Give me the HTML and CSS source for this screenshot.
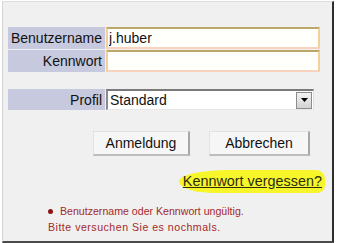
FILE: index.html
```html
<!DOCTYPE html>
<html lang="de">
<head>
<meta charset="utf-8">
<title>Anmeldung</title>
<link rel="stylesheet" href="styles.css">
</head>
<body>
<div class="panel">
  <div class="fields">
    <label class="lbl" for="user">Benutzername</label>
    <input class="txt" id="user" type="text" value="j.huber">
    <label class="lbl" for="pw">Kennwort</label>
    <input class="txt" id="pw" type="password" value="">
  </div>
  <div class="fields profil">
    <label class="lbl">Profil</label>
    <div class="select">
      <span class="sel-text">Standard</span>
      <span class="sel-btn"><svg width="7" height="4" viewBox="0 0 7 4"><path d="M0 0H7L3.5 4Z" fill="#000"/></svg></span>
    </div>
  </div>
  <div class="buttons">
    <button class="btn btn-login">Anmeldung</button>
    <button class="btn btn-cancel">Abbrechen</button>
  </div>
  <div class="forgot">
    <span class="hl"><a href="#">Kennwort vergessen?</a></span>
  </div>
  <div class="errors">
    <div class="err"><span class="dot"></span>Benutzername oder Kennwort ungültig.</div>
    <div class="err2">Bitte versuchen Sie es nochmals.</div>
  </div>
</div>
</body>
</html>
```
FILE: styles.css
```css
html, body {
  margin: 0;
  padding: 0;
  background: #ffffff;
}
body {
  font-family: "Liberation Sans", Arial, sans-serif;
  color: #111;
}
.panel {
  box-sizing: border-box;
  width: 332px;
  height: 242px;
  margin: 1px 0 0 2px;
  background: #f0f0f0;
  border-top: 1px solid #dcdcdc;
  border-left: 1px solid #d4d4d4;
  border-right: 2px solid #2e2e2e;
  border-bottom: 2px solid #4a4a4a;
  padding: 25px 0 0 5px;
}
.fields {
  display: grid;
  grid-template-columns: 97px 214px;
  grid-auto-rows: 22px;
  column-gap: 1px;
  row-gap: 1px;
}
.lbl {
  background: #c7c9de;
  font-size: 14px;
  text-align: right;
  padding-right: 3px;
  line-height: 22px;
  color: #111;
}
.txt {
  box-sizing: border-box;
  height: 22px;
  width: 214px;
  margin: 0;
  padding: 0 0 0 1px;
  font-family: "Liberation Sans", Arial, sans-serif;
  font-size: 14px;
  color: #111;
  background: #fffffc;
  border: 2px solid #f5cf98;
  border-top-color: #bda768;
  border-bottom-color: #f6d2bf;
  outline: none;
}
.profil {
  margin-top: 17px;
  grid-auto-rows: 21px;
}
.select {
  box-sizing: border-box;
  width: 208px;
  height: 21px;
  background: #ffffff;
  border-top: 2px solid #7a7a7a;
  border-left: 2px solid #8a8a8a;
  border-right: 1px solid #e0e0e0;
  border-bottom: 1px solid #e8e8e8;
  display: flex;
  align-items: center;
  justify-content: space-between;
  padding-left: 2px;
  font-size: 14px;
}
.sel-btn {
  box-sizing: border-box;
  width: 16px;
  height: 17px;
  margin-right: 1px;
  border: 1px solid #8c8c8c;
  background: linear-gradient(#f2f2f2, #d2d2d2);
  display: flex;
  align-items: center;
  justify-content: center;
}
.buttons {
  display: flex;
  gap: 19px;
  margin-top: 21px;
  padding-left: 85px;
}
.btn {
  box-sizing: border-box;
  height: 25px;
  font-family: "Liberation Sans", Arial, sans-serif;
  font-size: 14px;
  color: #111;
  background: #f6f6f6;
  border: 1px solid #e2e2e2;
  border-right: 2px solid #a8a8a8;
  border-bottom: 2px solid #bdbdbd;
  padding: 0;
}
.btn-login { width: 97px; }
.btn-cancel { width: 101px; }
.forgot {
  display: flex;
  justify-content: flex-end;
  margin-top: 14px;
  padding-right: 7px;
}
.hl {
  background: #f6f62a;
  padding: 3px 3px 4px 4px;
  border-radius: 40% 10px 10px 30% / 60% 50% 40% 60%;
  line-height: 16px;
}
.hl a {
  font-size: 14.4px;
  color: #2d2d10;
  text-decoration: underline;
}
.errors {
  margin-top: 10px;
  padding-left: 40px;
  font-size: 10.6px;
  color: #a42a2a;
}
.err {
  display: flex;
  align-items: center;
  height: 16px;
}
.dot {
  width: 5px;
  height: 5px;
  border-radius: 50%;
  background: #8a1414;
  margin-right: 7px;
}
.err2 {
  height: 16px;
  line-height: 16px;
  letter-spacing: 0.5px;
}
```
